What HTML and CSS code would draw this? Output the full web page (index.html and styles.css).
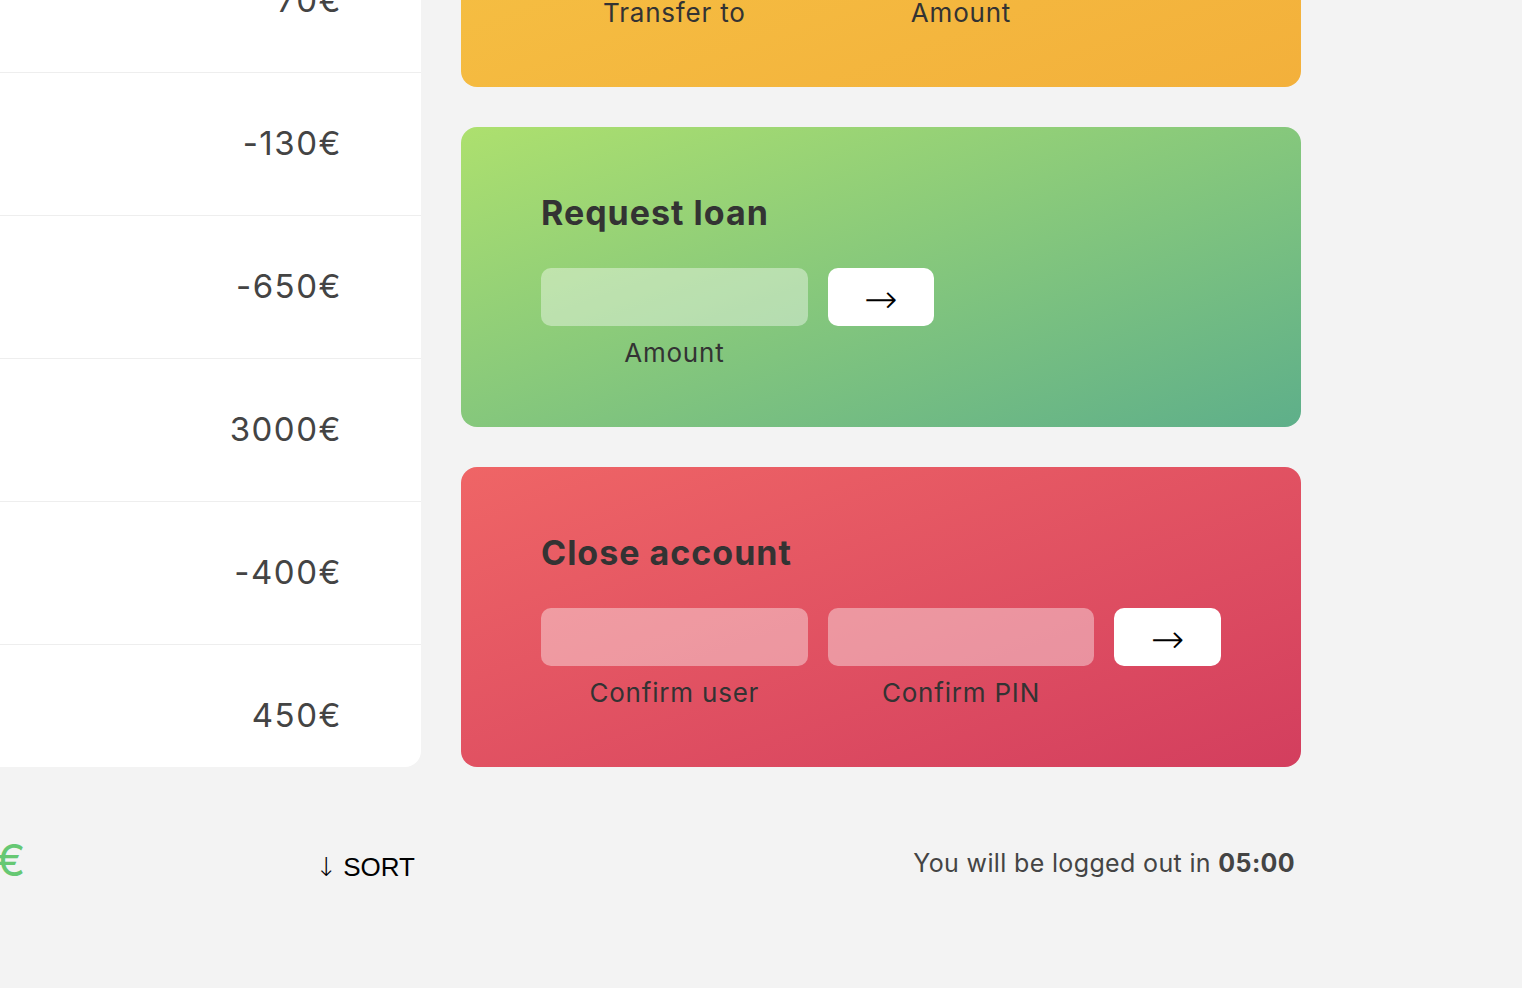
FILE: index.html
```html
<!DOCTYPE html>
<html lang="en">
<head>
<meta charset="utf-8">
<title>Bankist</title>
<link rel="stylesheet" href="styles.css">
</head>
<body>
<main class="app">
  <div class="movements">
    <div class="movements__row"><div class="movements__value">1300€</div></div>
    <div class="movements__row"><div class="movements__value">70€</div></div>
    <div class="movements__row"><div class="movements__value">-130€</div></div>
    <div class="movements__row"><div class="movements__value">-650€</div></div>
    <div class="movements__row"><div class="movements__value">3000€</div></div>
    <div class="movements__row"><div class="movements__value">-400€</div></div>
    <div class="movements__row"><div class="movements__value">450€</div></div>
    <div class="movements__row"><div class="movements__value">200€</div></div>
  </div>

  <div class="operation operation--transfer">
    <h2 class="operation__title">Transfer money</h2>
    <form class="form form--transfer">
      <div class="form__input"></div>
      <div class="form__input"></div>
      <button class="form__btn" type="button">&rarr;</button>
      <label class="form__label">Transfer to</label>
      <label class="form__label">Amount</label>
    </form>
  </div>

  <div class="operation operation--loan">
    <h2 class="operation__title">Request loan</h2>
    <form class="form form--loan">
      <div class="form__input form__input--loan"></div>
      <button class="form__btn" type="button">&rarr;</button>
      <label class="form__label">Amount</label>
    </form>
  </div>

  <div class="operation operation--close">
    <h2 class="operation__title">Close account</h2>
    <form class="form form--close">
      <div class="form__input"></div>
      <div class="form__input"></div>
      <button class="form__btn" type="button">&rarr;</button>
      <label class="form__label">Confirm user</label>
      <label class="form__label">Confirm PIN</label>
    </form>
  </div>

  <div class="summary">
    <p class="summary__value">€</p>
    <button class="btn--sort" type="button"><span class="btn--sort__arrow">&darr;</span>SORT</button>
  </div>

  <p class="logout-timer">You will be logged out in <span class="timer">05:00</span></p>
</main>
</body>
</html>
```

FILE: styles.css
```css
* {
  margin: 0;
  padding: 0;
  box-sizing: border-box;
}

html, body {
  background: #f3f3f3;
  overflow: hidden;
}

body {
  font-family: "Inter", "Noto Sans", sans-serif;
  color: #444;
  height: 988px;
}

.app {
  display: grid;
  grid-template-columns: 421px 840px;
  grid-template-rows: repeat(3, 300px) auto;
  column-gap: 40px;
  row-gap: 40px;
  margin-top: -213px;
}

/* Movements */
.movements {
  grid-row: 1 / span 3;
  grid-column: 1;
  background: #fff;
  border-radius: 0 16px 16px 0;
  overflow: hidden;
}

.movements__row {
  height: 143px;
  padding: 0 80px;
  display: flex;
  align-items: center;
  justify-content: flex-end;
  border-bottom: 1px solid #eee;
}

.movements__value {
  font-size: 33px;
  line-height: 40px;
  margin-top: -2px;
  color: #444;
  letter-spacing: 1.5px;
  margin-right: -1px;
}

/* Operations */
.operation {
  grid-column: 2;
  border-radius: 16px;
  padding: 60px 80px 0;
  color: #333;
}

.operation--transfer {
  grid-row: 1;
  background: linear-gradient(to top left, #f3b03b, #f6c445);
}

.operation--loan {
  grid-row: 2;
  background: linear-gradient(to top left, #5eaf8a, #ade06e);
}

.operation--close {
  grid-row: 3;
  background: linear-gradient(to top left, #d33e5e, #ef6566);
}

.operation__title {
  font-size: 34px;
  line-height: 51px;
  font-weight: 700;
  letter-spacing: 1px;
  margin-bottom: 30px;
  color: #333;
}

.form {
  display: grid;
  grid-template-columns: 2.5fr 2.5fr 1fr;
  column-gap: 20px;
}

.form--loan {
  grid-template-columns: 2.5fr 1fr 2.5fr;
}

.form__input {
  height: 58px;
  border-radius: 10px;
  background: rgba(255, 255, 255, 0.4);
}

.form__btn {
  height: 58px;
  border: none;
  border-radius: 10px;
  background: #fff;
  color: #000;
  font-family: "DejaVu Sans", sans-serif;
  font-size: 40px;
  font-weight: 300;
  line-height: 1;
  padding-top: 3px;
  cursor: pointer;
}

.form__label {
  grid-row: 2;
  text-align: center;
  font-size: 26px;
  line-height: 36px;
  margin-top: 9px;
  letter-spacing: 0.8px;
  color: #333;
}

.form--loan .form__label {
  grid-column: 1;
}

/* Summary */
.summary {
  grid-row: 4;
  grid-column: 1;
  display: flex;
  align-items: baseline;
  margin-top: 20px;
}

.summary__value {
  font-size: 44px;
  line-height: 66px;
  font-weight: 400;
  color: #66c873;
  margin-left: -4px;
}

.btn--sort {
  margin-left: auto;
  border: none;
  background: none;
  font-family: "Liberation Sans", Arial, sans-serif;
  font-size: 26px;
  line-height: 30px;
  font-weight: 500;
  color: #000;
  padding: 1px 6px;
  cursor: pointer;
}

.btn--sort__arrow {
  font-family: "DejaVu Sans", sans-serif;
  font-size: 26px;
  line-height: 1;
  font-weight: 300;
  margin-right: 6px;
}

.logout-timer {
  grid-row: 4;
  grid-column: 2;
  text-align: right;
  padding: 0 6px;
  margin-top: 38px;
  font-size: 25px;
  line-height: 37px;
  letter-spacing: 0.35px;
  color: #444;
}

.timer {
  font-weight: 700;
}
```
